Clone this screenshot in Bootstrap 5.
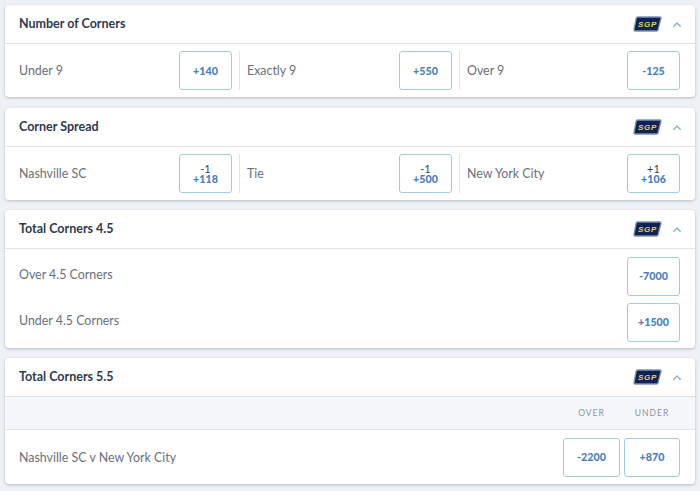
<!DOCTYPE html>
<html lang="en">
<head>
<meta charset="utf-8">
<title>Corners</title>
<link href="https://cdn.jsdelivr.net/npm/bootstrap@5.3.0/dist/css/bootstrap.min.css" rel="stylesheet">
<style>
html,body{height:491px;overflow:hidden}
body{background:#eef2f6;font-family:"Lato","Liberation Sans",sans-serif;padding:5px 5px 0;color:#6a6f7a}
.mkt{background:#fff;border-radius:4px;box-shadow:0 1px 3px rgba(60,70,90,.3);margin-bottom:10px;overflow:hidden}
.mkt:first-of-type{margin-bottom:11px}
.mkt-head{height:39px;padding:0 13px 0 14px;border-bottom:1px solid #e1e5ea}
.mkt-title{font-size:12.5px;font-weight:700;line-height:18px;color:#2f3a4c}
.sgp{width:29px;height:16px;display:block;margin-right:10px}
.sgp-txt{font-family:"Liberation Sans",sans-serif;font-size:8px;font-weight:700;font-style:italic;fill:#e8d468;letter-spacing:.7px}
.chev{width:10px;height:7px;display:block}
.row3{height:53px;padding:7px 15px 7px 14px}
.cell{flex:0 0 220px;min-width:0}
.cell-a{padding-right:7px}
.cell-b{padding:0 7px;border-left:1px solid #e1e5ea}
.cell-c{flex-basis:221px;padding-left:7px;border-left:1px solid #e1e5ea}
.lbl{font-size:12.4px;line-height:18px;color:#6a6f7a}
.odd{width:53px;height:39px;border:1px solid #a3cbdf;border-radius:3px;background:#fff;font-size:10.7px;font-weight:900;color:#4a7fc0;line-height:10px;flex:none}
.odd-lbl{display:block;font-size:11px;font-weight:400;color:#3c4450;line-height:10px}
.ln{padding:0 15px 0 14px;height:46px}
.ln .lbl{padding-bottom:3px}
.ln-wrap{padding:4px 0 3px}
.colhd{height:33px;background:#f5f8fb;border-bottom:1px solid #e1e5ea;padding:0 15px;font-size:8.5px;line-height:12px;letter-spacing:1px;color:#8d929b}
.colhd span{display:block;text-align:center}
.w1{width:57px}.w2{width:56px;margin-left:4px}
.wide{width:57px}.wide2{width:56px;margin-left:4px}
.row-last{height:54px;padding:0 15px 0 14px}
.row-last .lbl{padding-top:2px}
</style>
</head>
<body>

<section class="mkt">
  <div class="mkt-head d-flex align-items-center justify-content-between">
    <div class="mkt-title">Number of Corners</div>
    <div class="d-flex align-items-center"><svg class="sgp" viewBox="0 0 29 16"><path d="M4.500 1H27a1 1 0 0 1 1 1.300L25 14a1.400 1.400 0 0 1-1.300 1H2a1 1 0 0 1-1-1.300L3.200 2A1.400 1.400 0 0 1 4.500 1Z" fill="#0e2350" stroke="#8093b3" stroke-width="1.300"/><text class="sgp-txt" x="14.500" y="11" text-anchor="middle">SGP</text></svg><svg class="chev" viewBox="0 0 10 7"><path d="M1.300 5.800 5 2 8.700 5.800" fill="none" stroke="#8fb2cc" stroke-width="1.500"/></svg></div>
  </div>
  <div class="row3 d-flex">
    <div class="cell cell-a d-flex align-items-center justify-content-between"><span class="lbl">Under 9</span><button class="odd p-0">+140</button></div>
    <div class="cell cell-b d-flex align-items-center justify-content-between"><span class="lbl">Exactly 9</span><button class="odd p-0">+550</button></div>
    <div class="cell cell-c d-flex align-items-center justify-content-between"><span class="lbl">Over 9</span><button class="odd p-0">-125</button></div>
  </div>
</section>

<section class="mkt">
  <div class="mkt-head d-flex align-items-center justify-content-between">
    <div class="mkt-title">Corner Spread</div>
    <div class="d-flex align-items-center"><svg class="sgp" viewBox="0 0 29 16"><path d="M4.500 1H27a1 1 0 0 1 1 1.300L25 14a1.400 1.400 0 0 1-1.300 1H2a1 1 0 0 1-1-1.300L3.200 2A1.400 1.400 0 0 1 4.500 1Z" fill="#0e2350" stroke="#8093b3" stroke-width="1.300"/><text class="sgp-txt" x="14.500" y="11" text-anchor="middle">SGP</text></svg><svg class="chev" viewBox="0 0 10 7"><path d="M1.300 5.800 5 2 8.700 5.800" fill="none" stroke="#8fb2cc" stroke-width="1.500"/></svg></div>
  </div>
  <div class="row3 d-flex">
    <div class="cell cell-a d-flex align-items-center justify-content-between"><span class="lbl">Nashville SC</span><button class="odd p-0"><span class="odd-lbl">-1</span>+118</button></div>
    <div class="cell cell-b d-flex align-items-center justify-content-between"><span class="lbl">Tie</span><button class="odd p-0"><span class="odd-lbl">-1</span>+500</button></div>
    <div class="cell cell-c d-flex align-items-center justify-content-between"><span class="lbl">New York City</span><button class="odd p-0"><span class="odd-lbl">+1</span>+106</button></div>
  </div>
</section>

<section class="mkt">
  <div class="mkt-head d-flex align-items-center justify-content-between">
    <div class="mkt-title">Total Corners 4.5</div>
    <div class="d-flex align-items-center"><svg class="sgp" viewBox="0 0 29 16"><path d="M4.500 1H27a1 1 0 0 1 1 1.300L25 14a1.400 1.400 0 0 1-1.300 1H2a1 1 0 0 1-1-1.300L3.200 2A1.400 1.400 0 0 1 4.500 1Z" fill="#0e2350" stroke="#8093b3" stroke-width="1.300"/><text class="sgp-txt" x="14.500" y="11" text-anchor="middle">SGP</text></svg><svg class="chev" viewBox="0 0 10 7"><path d="M1.300 5.800 5 2 8.700 5.800" fill="none" stroke="#8fb2cc" stroke-width="1.500"/></svg></div>
  </div>
  <div class="ln-wrap">
    <div class="ln d-flex align-items-center justify-content-between"><span class="lbl">Over 4.5 Corners</span><button class="odd p-0">-7000</button></div>
    <div class="ln d-flex align-items-center justify-content-between"><span class="lbl">Under 4.5 Corners</span><button class="odd p-0">+1500</button></div>
  </div>
</section>

<section class="mkt">
  <div class="mkt-head d-flex align-items-center justify-content-between">
    <div class="mkt-title">Total Corners 5.5</div>
    <div class="d-flex align-items-center"><svg class="sgp" viewBox="0 0 29 16"><path d="M4.500 1H27a1 1 0 0 1 1 1.300L25 14a1.400 1.400 0 0 1-1.300 1H2a1 1 0 0 1-1-1.300L3.200 2A1.400 1.400 0 0 1 4.500 1Z" fill="#0e2350" stroke="#8093b3" stroke-width="1.300"/><text class="sgp-txt" x="14.500" y="11" text-anchor="middle">SGP</text></svg><svg class="chev" viewBox="0 0 10 7"><path d="M1.300 5.800 5 2 8.700 5.800" fill="none" stroke="#8fb2cc" stroke-width="1.500"/></svg></div>
  </div>
  <div class="colhd d-flex align-items-center justify-content-end"><span class="w1">OVER</span><span class="w2">UNDER</span></div>
  <div class="row-last d-flex align-items-center justify-content-between"><span class="lbl">Nashville SC v New York City</span><div class="d-flex"><button class="odd p-0 wide">-2200</button><button class="odd p-0 wide2">+870</button></div></div>
</section>
</body>
</html>
